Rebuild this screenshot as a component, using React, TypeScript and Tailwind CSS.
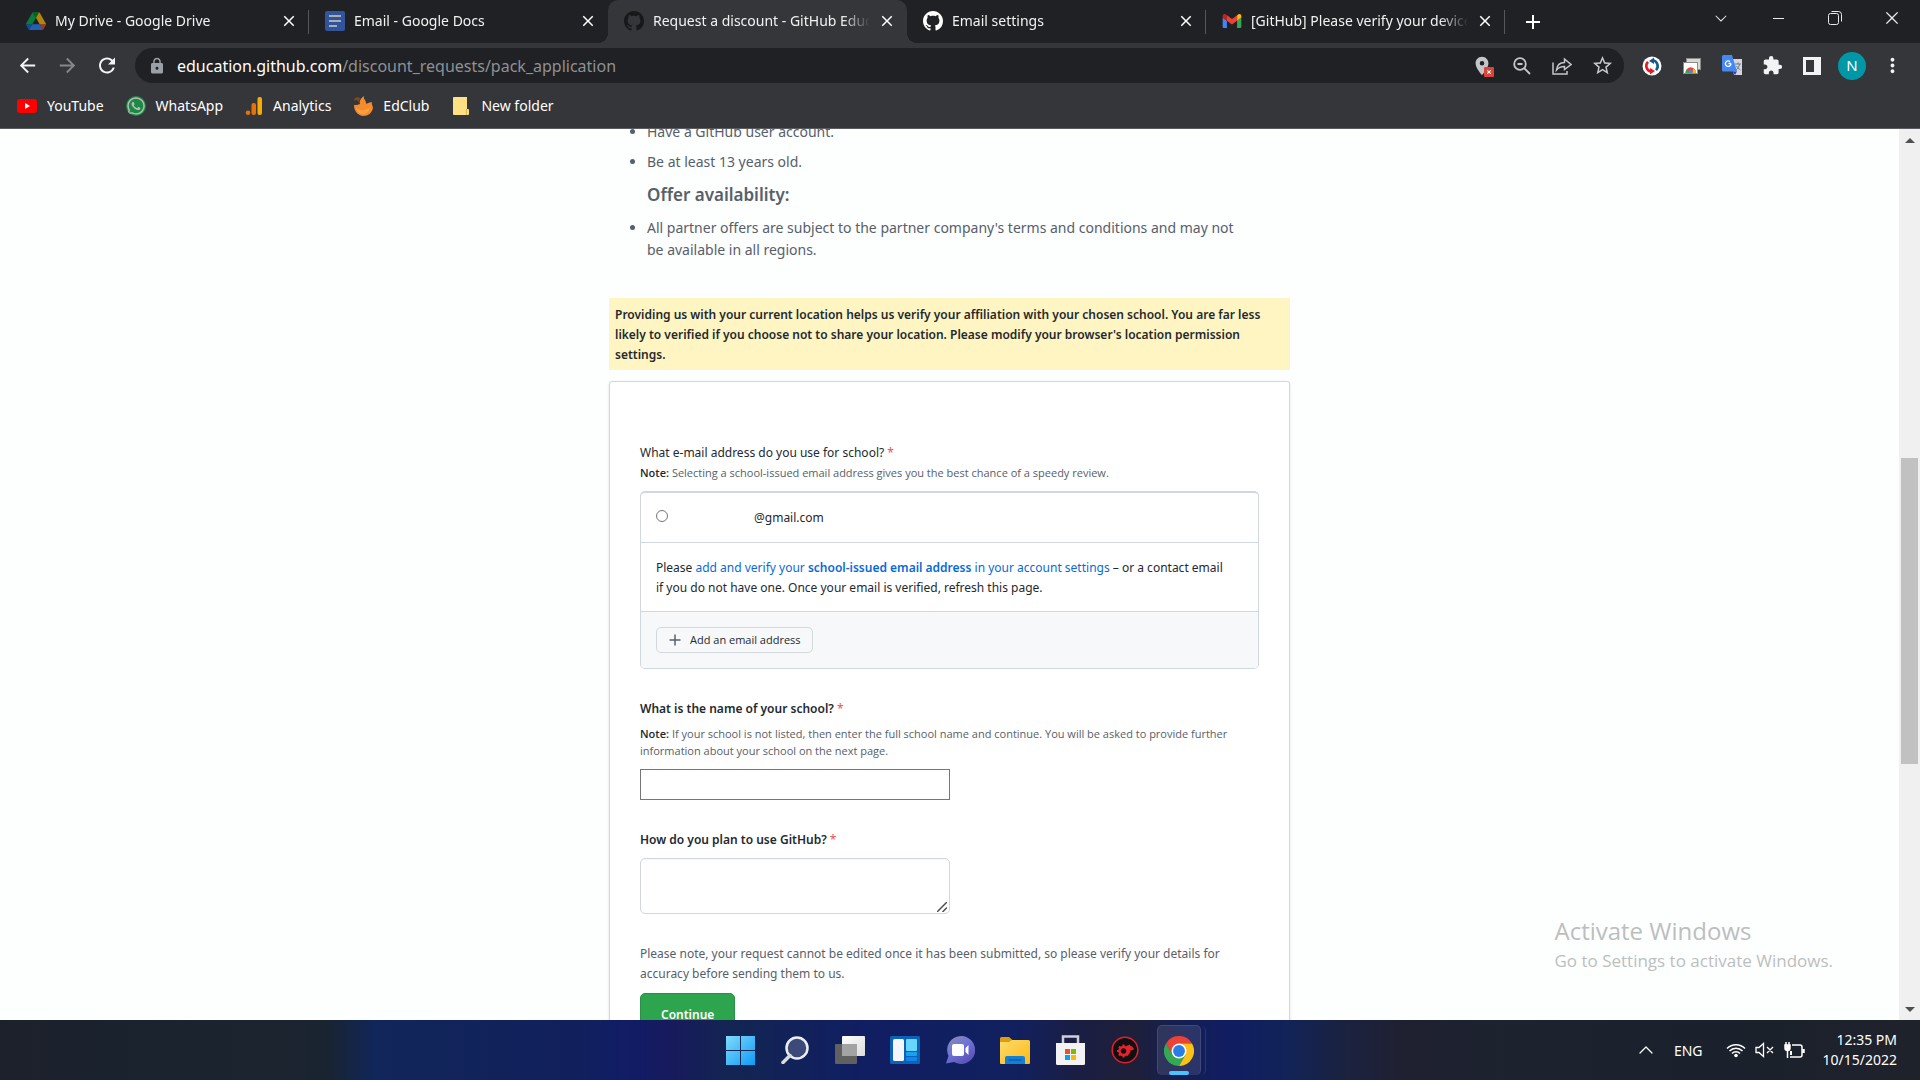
import type { ReactNode } from "react";
import { MdArrowBack, MdArrowForward, MdRefresh, MdLock, MdStarOutline, MdExtension, MdClose, MdAdd, MdMoreVert, MdLocationOn } from "react-icons/md";
import { FaWhatsapp } from "react-icons/fa";
import { VscChromeClose, VscChromeMinimize, VscChevronDown } from "react-icons/vsc";
import { ChevronUp } from "lucide-react";

const GITHUB_MARK =
  "M8 0C3.58 0 0 3.58 0 8c0 3.54 2.29 6.53 5.47 7.59.4.07.55-.17.55-.38 0-.19-.01-.82-.01-1.49-2.01.37-2.53-.49-2.69-.94-.09-.23-.48-.94-.82-1.13-.28-.15-.68-.52-.01-.53.63-.01 1.08.58 1.23.82.72 1.21 1.87.87 2.33.66.07-.52.28-.87.51-1.07-1.78-.2-3.64-.89-3.64-3.95 0-.87.31-1.59.82-2.15-.08-.2-.36-1.02.08-2.12 0 0 .67-.21 2.2.82.64-.18 1.32-.27 2-.27s1.36.09 2 .27c1.53-1.04 2.2-.82 2.2-.82.44 1.1.16 1.92.08 2.12.51.56.82 1.27.82 2.15 0 3.07-1.87 3.75-3.65 3.95.29.25.54.73.54 1.48 0 1.07-.01 1.93-.01 2.2 0 .21.15.46.55.38A8.01 8.01 0 0 0 16 8c0-4.42-3.58-8-8-8z";

function GitHubIcon({ className }: { className: string }) {
  return (
    <svg viewBox="0 0 16 16" className={`size-5 ${className}`} fill="currentColor">
      <path d={GITHUB_MARK} />
    </svg>
  );
}

function DriveIcon() {
  return (
    <svg viewBox="0 0 87.3 78" className="h-[18px] w-5 opacity-65">
      <path fill="#0066da" d="m6.6 66.85 3.85 6.65c.8 1.4 1.95 2.5 3.3 3.3l13.75-23.8h-27.5c0 1.55.4 3.1 1.2 4.5z" />
      <path fill="#00ac47" d="m43.65 25-13.75-23.8c-1.35.8-2.5 1.9-3.3 3.3l-25.4 44a9.06 9.06 0 0 0 -1.2 4.5h27.5z" />
      <path fill="#ea4335" d="m73.55 76.8c1.35-.8 2.5-1.9 3.3-3.3l1.6-2.75 7.65-13.25c.8-1.4 1.2-2.95 1.2-4.5h-27.502l5.852 11.5z" />
      <path fill="#00832d" d="m43.65 25 13.75-23.8c-1.35-.8-2.9-1.2-4.5-1.2h-18.5c-1.6 0-3.15.45-4.5 1.2z" />
      <path fill="#2684fc" d="m59.8 53h-32.3l-13.75 23.8c1.35.8 2.9 1.2 4.5 1.2h50.8c1.6 0 3.15-.45 4.5-1.2z" />
      <path fill="#ffba00" d="m73.4 26.5-12.7-22c-.8-1.4-1.95-2.5-3.3-3.3l-13.75 23.8 16.15 28h27.45c0-1.55-.4-3.1-1.2-4.5z" />
    </svg>
  );
}

function DocsIcon() {
  return (
    <svg viewBox="0 0 20 20" className="size-5">
      <rect width="20" height="20" rx="2" fill="#32549b" />
      <path d="M4 5h12M4 10h12M4 15h8" stroke="#a9adb5" strokeWidth="2" />
    </svg>
  );
}

function GmailIcon() {
  return (
    <svg viewBox="52 42 88 66" className="h-[14px] w-5">
      <path fill="#4285f4" d="M58 108h14V74L52 59v43c0 3.32 2.69 6 6 6" />
      <path fill="#34a853" d="M120 108h14c3.32 0 6-2.69 6-6V59l-20 15" />
      <path fill="#fbbc04" d="M120 48v26l20-15v-8c0-7.42-8.47-11.65-14.4-7.2" />
      <path fill="#ea4335" d="M72 74V48l24 18 24-18v26L96 92" />
      <path fill="#c5221f" d="M52 51v8l20 15V48l-5.6-4.2c-5.94-4.45-14.4-.22-14.4 7.2" />
    </svg>
  );
}

function ChromeLogo({ className }: { className: string }) {
  return (
    <svg viewBox="0 0 48 48" className={className}>
      <path fill="#ea4335" d="M24 12h20.8A24 24 0 0 0 3.2 12l10.4 18z" />
      <path fill="#34a853" d="M13.6 30 3.2 12A24 24 0 0 0 24 48l10.4-18z" />
      <path fill="#fbc116" d="M34.4 30 24 48a24 24 0 0 0 20.8-36H24z" />
      <circle cx="24" cy="24" r="12" fill="#fff" />
      <circle cx="24" cy="24" r="9.5" fill="#2a7de9" />
    </svg>
  );
}

type TabProps = { icon: ReactNode; title: string; active?: boolean; divider?: boolean };

function Tab({ icon, title, active, divider }: TabProps) {
  return (
    <div className={`relative flex h-full max-w-[299px] flex-1 items-center pb-0.5 pl-4 pr-[7px] ${active ? "rounded-t-[10px] bg-[#35363a]" : ""}`}>
      {active && (
        <>
          <span className="absolute bottom-0 -left-[10px] size-[10px] bg-[radial-gradient(circle_at_0_0,#202124_10px,#35363a_10px)]" />
          <span className="absolute bottom-0 -right-[10px] size-[10px] bg-[radial-gradient(circle_at_100%_0,#202124_10px,#35363a_10px)]" />
        </>
      )}
      <button className="flex h-full min-w-0 flex-1 items-center text-left">
        <span className="flex w-5 shrink-0 justify-center">{icon}</span>
        <span className="ml-[9px] flex-1 overflow-hidden text-[14px] whitespace-nowrap text-[#f1f1f1] [mask-image:linear-gradient(to_right,#000_calc(100%-28px),transparent)]">
          {title}
        </span>
      </button>
      <button aria-label={`Close ${title}`} className="ml-1 flex size-[26px] shrink-0 items-center justify-center text-white">
        <MdClose className="size-[18px]" />
      </button>
      {divider && <span className="absolute right-0 top-[10px] h-6 w-px bg-[#55575b]" />}
    </div>
  );
}

function TabStrip() {
  return (
    <div className="flex h-[43px] items-center bg-[#202124] pl-[10px]">
      <Tab icon={<DriveIcon />} title="My Drive - Google Drive" divider />
      <Tab icon={<DocsIcon />} title="Email - Google Docs" />
      <Tab icon={<GitHubIcon className="text-[#17181a]" />} title="Request a discount - GitHub Education" active />
      <Tab icon={<GitHubIcon className="text-white" />} title="Email settings" divider />
      <Tab icon={<GmailIcon />} title="[GitHub] Please verify your device" divider />
      <button aria-label="New tab" className="ml-4 text-white">
        <MdAdd className="size-6" />
      </button>
      <div className="-mt-2 ml-auto flex items-center text-[#e8eaed]">
        <button aria-label="Search tabs" className="flex w-[57px] justify-center"><VscChevronDown className="size-[18px]" /></button>
        <button aria-label="Minimize" className="flex w-[57px] justify-center"><VscChromeMinimize className="size-4" /></button>
        <button aria-label="Restore" className="flex w-[57px] justify-center">
          <svg viewBox="0 0 14 14" className="size-[14px]" fill="none" stroke="currentColor">
            <rect x="0.5" y="2.5" width="10" height="11" rx="2" />
            <path d="M3.5.5h7a3 3 0 0 1 3 3v7" />
          </svg>
        </button>
        <button aria-label="Close window" className="flex w-[57px] justify-center"><VscChromeClose className="size-[18px]" /></button>
      </div>
    </div>
  );
}

function Toolbar() {
  return (
    <div className="flex h-[45px] items-center pl-[15px] text-[#f1f3f4]">
      <button aria-label="Back" className="flex w-6 justify-center"><MdArrowBack className="size-[23px]" /></button>
      <button aria-label="Forward" className="ml-4 flex w-6 justify-center text-[#85878b]"><MdArrowForward className="size-[23px]" /></button>
      <button aria-label="Reload" className="ml-4 flex w-6 justify-center"><MdRefresh className="size-[25px]" /></button>
      <div className="ml-4 flex h-[35px] flex-1 items-center rounded-full bg-[#202124] pl-[13px] pr-[10px]">
        <MdLock className="size-[18px] text-[#9aa0a6]" />
        <a href="#address" className="ml-[11px] flex-1 text-[16px] text-[#8d9195]">
          <span className="text-white">education.github.com</span>/discount_requests/pack_application
        </a>
        <div className="flex items-center gap-4 text-[#c4c6c9]">
          <button aria-label="Location blocked" className="relative flex w-6 justify-center">
            <MdLocationOn className="size-[22px]" />
            <svg viewBox="0 0 9 9" className="absolute right-0 bottom-0 size-[10px]">
              <rect width="9" height="9" rx="1" fill="#db4437" />
              <path d="M3 3l3 3M6 3L3 6" stroke="#fff" />
            </svg>
          </button>
          <button aria-label="Zoom" className="flex w-6 justify-center">
            <svg viewBox="0 0 18 18" className="size-[18px]" fill="none" stroke="currentColor" strokeWidth="1.8">
              <circle cx="7" cy="7" r="5.8" />
              <path d="M4.5 7h5M11 11l6 6" />
            </svg>
          </button>
          <button aria-label="Share" className="flex w-6 justify-center">
            <svg viewBox="0 0 20 18" className="h-[18px] w-5" fill="none" stroke="currentColor" strokeWidth="1.5">
              <path d="M1 5.5V17h14v-3" />
              <path d="M4.5 13C5 8.5 8 5.5 12.5 5.5V2L19 7.5 12.5 12.5V9.500C9 9.5 6.5 10.5 4.5 13z" />
            </svg>
          </button>
          <button aria-label="Bookmark" className="flex w-6 justify-center"><MdStarOutline className="size-[23px]" /></button>
        </div>
      </div>
      <div className="flex items-center gap-4 pl-4 pr-4">
        <button aria-label="Sync extension" className="flex w-6 justify-center">
          <svg viewBox="0 0 20 20" className="size-5">
            <circle cx="10" cy="10" r="9.500" fill="#fff" />
            <path d="M11 4.200A6 6 0 0 1 14 14.200" stroke="#135a8c" strokeWidth="2.600" fill="none" />
            <path d="M12 1.500v6.500L7 5z" fill="#135a8c" />
            <path d="M9 15.800A6 6 0 0 1 6 5.800" stroke="#e21b22" strokeWidth="2.600" fill="none" />
            <path d="M8 18.500V12l5 3z" fill="#e21b22" />
          </svg>
        </button>
        <button aria-label="Screenshots extension" className="flex w-6 justify-center">
          <svg viewBox="0 0 18 16" className="h-4 w-[18px]">
            <rect x="3.5" y=".5" width="14" height="11" fill="#d8d8d8" stroke="#8b8b8b" />
            <rect x=".5" y="4.5" width="14" height="11" fill="#fff" stroke="#8b8b8b" />
            <path d="M2.500 15a5 5.500 0 0 1 10.500 0z" fill="#ea4335" />
            <path d="M2.500 15a5.500 5.500 0 0 1 1-3.500l3 3.500z" fill="#34a853" />
            <path d="M9 15l1.500-4.500a5.500 5.500 0 0 1 2.500 4.500z" fill="#fbbc04" />
            <circle cx="7.800" cy="13.500" r="2" fill="#4285f4" />
          </svg>
        </button>
        <button aria-label="Translate" className="flex w-6 justify-center">
          <svg viewBox="0 0 21 21" className="size-[21px]">
            <path d="M8 4h12v16h-8z" fill="#d5d7db" />
            <path d="M13 9h6M16 7.5V9M14 15c2-1.5 3-3 3.5-6M14.5 11c1 2 2.5 3 4 4" stroke="#6b7a90" fill="none" />
            <path d="M0 1.5A1.5 1.5 0 0 1 1.5 0H10l5 16.5H1.5A1.5 1.5 0 0 1 0 15z" fill="#4688f1" />
            <path d="M10.5 16.5H15L13 20z" fill="#3a3fb0" />
            <path d="M9 8.500H6.500M9 8.500A2.800 2.800 0 1 1 8 6.500" stroke="#fff" strokeWidth="1.300" fill="none" />
          </svg>
        </button>
        <button aria-label="Extensions" className="flex w-6 justify-center"><MdExtension className="size-[21px]" /></button>
        <button aria-label="Side panel" className="flex w-6 justify-center">
          <svg viewBox="0 0 18 18" className="size-[18px]">
            <path fill="currentColor" fillRule="evenodd" d="M0 0h18v18H0zM3 3v12h8V3z" />
          </svg>
        </button>
        <button aria-label="Profile" className="-mx-0.5 flex size-7 items-center justify-center rounded-full bg-[#0097a7] text-[15px] text-white">N</button>
        <button aria-label="Menu" className="flex w-6 justify-center"><MdMoreVert className="size-[23px]" /></button>
      </div>
    </div>
  );
}

function BookmarksBar() {
  const items: { label: string; icon: ReactNode }[] = [
    {
      label: "YouTube",
      icon: (
        <svg viewBox="0 0 20 14" className="h-[14px] w-5">
          <rect width="20" height="14" rx="3" fill="#f00" />
          <path d="M8 4l5 3-5 3z" fill="#fff" />
        </svg>
      ),
    },
    {
      label: "WhatsApp",
      icon: <FaWhatsapp className="size-5 rounded-full bg-[#1d8a43] text-[#b6bbb8]" />,
    },
    {
      label: "Analytics",
      icon: (
        <svg viewBox="0 0 18 18" className="size-[18px]">
          <rect x="12.5" width="4.5" height="18" rx="2" fill="#f9ab00" />
          <rect x="6.5" y="6" width="4.5" height="12" rx="2" fill="#e8710a" />
          <circle cx="3" cy="15.7" r="2.3" fill="#e8710a" />
        </svg>
      ),
    },
    {
      label: "EdClub",
      icon: (
        <svg viewBox="0 0 20 20" className="size-5">
          <path d="M1 9c2 0 4 0 6-1C6 5 8 2 11 0c-1 3 2 4 2 7 0 1 1 1 2 0l4-1c-1 2 1 4 1 6-1 5-5 8-9.500 8S1 16 1 9z" fill="#f68b2c" />
          <path d="M6 7C5 4 3 3 1 5c0-3 3-5 6-3z" fill="#7b4a1e" />
          <path d="M3 12c3 3 10 3 14-1-1 5-4 7-7 7s-6-2-7-6z" fill="#fb9f45" />
        </svg>
      ),
    },
    {
      label: "New folder",
      icon: (
        <svg viewBox="0 0 16 18" className="h-[18px] w-5">
          <path d="M0 1a1 1 0 0 1 1-1h13v12h1a1 1 0 0 1 1 1v4a1 1 0 0 1-1 1H1a1 1 0 0 1-1-1z" fill="#ffe082" />
          <path d="M13.5 12v6" stroke="#d9b44a" />
        </svg>
      ),
    },
  ];
  return (
    <nav className="flex h-[41px] items-center gap-[22px] border-b border-[#5b5c5f] pb-[5px] pl-[17px] text-[14px] text-white">
      {items.map((b) => (
        <a key={b.label} href="#bookmark" className="flex items-center gap-[10px]">
          {b.icon}
          {b.label}
        </a>
      ))}
    </nav>
  );
}

function Required() {
  return <span className="font-normal text-[#f0524f]">*</span>;
}

function DiscountForm() {
  return (
    <form className="mt-[11px] rounded-[3px] border border-[#d0d7de] bg-white px-[30px] pt-[61px] pb-10 text-[12px] leading-5 shadow-sm">
      <fieldset>
        <legend className="text-[12px]">What e-mail address do you use for school? <Required /></legend>
        <p className="mt-px font-['Open_Sans'] text-[11px] leading-[17px] text-[#57606a]">
          <b className="font-semibold text-[#24292f]">Note:</b> Selecting a school-issued email address gives you the best chance of a speedy review.
        </p>
        <div className="mt-[10px] overflow-hidden rounded-[5px] border border-t-2 border-[#d0d7de]">
          <div className="flex h-[49px] items-center px-[15px] pt-px">
            <input id="mail" type="radio" name="mail" className="mb-1 size-3 appearance-none rounded-full border border-[#767676]" />
            <label htmlFor="mail" className="ml-[86px]">@gmail.com</label>
          </div>
          <p className="border-t border-[#d0d7de] px-[15px] pt-[15px] pb-[13px]">
            Please{" "}
            <a href="#settings" className="text-[#0969da]">
              add and verify your <b className="font-semibold">school-issued email address</b> in your account settings
            </a>{" "}
            – or a contact email<br />if you do not have one. Once your email is verified, refresh this page.
          </p>
          <div className="border-t border-[#d0d7de] bg-[#f6f8fa] px-[15px] py-[15px]">
            <button type="button" className="flex h-[26px] items-center gap-2 rounded-[5px] border border-[#d3d8dc] px-[11px] font-['Open_Sans'] text-[11px] font-medium">
              <svg viewBox="0 0 14 14" className="size-[14px]" stroke="#57606a" strokeWidth="1.5">
                <path d="M7 1.5v11M1.5 7h11" />
              </svg>
              Add an email address
            </button>
          </div>
        </div>
      </fieldset>

      <label htmlFor="school" className="mt-[30px] block font-semibold">What is the name of your school? <Required /></label>
      <p className="mt-[6px] font-['Open_Sans'] text-[11px] leading-[17px] text-[#57606a]">
        <b className="font-semibold text-[#24292f]">Note:</b> If your school is not listed, then enter the full school name and continue. You will be asked to provide further<br />
        information about your school on the next page.
      </p>
      <input id="school" type="text" className="mt-[10px] block h-[31px] w-1/2 border border-[#767676] px-2" />

      <label htmlFor="plan" className="mt-[30px] block font-semibold">How do you plan to use GitHub? <Required /></label>
      <div className="relative mt-2 w-1/2">
        <textarea id="plan" className="block h-14 w-full resize-none rounded-[5px] border border-[#d0d7de] px-2 shadow-[inset_0_1px_0_rgba(208,215,222,0.2)]" />
        <svg viewBox="0 0 10 10" className="pointer-events-none absolute right-[3px] bottom-[2px] size-[10px]" stroke="#505050" strokeWidth="1.5">
          <path d="M0 10L10 0M5.500 10L10 5.500" />
        </svg>
      </div>

      <p className="mt-[30px] text-[#57606a]">
        Please note, your request cannot be edited once it has been submitted, so please verify your details for<br />
        accuracy before sending them to us.
      </p>
      <button type="button" className="mt-[9px] h-[43px] rounded-[5px] border border-[#2a8f47] bg-[#2da44e] px-5 font-semibold text-white">Continue</button>
    </form>
  );
}

function Page() {
  return (
    <div className="flex min-h-0 flex-1 bg-[#fdfefe]">
      <main className="min-w-0 flex-1 overflow-hidden text-[#24292f]">
        <div className="mx-auto max-w-[681px]">
          <div className="-mt-2 pl-[38px] pr-10 text-[14px] leading-[22px] text-[#57606a]">
            <ul className="list-disc space-y-2">
              <li>Have a GitHub user account.</li>
              <li>Be at least 13 years old.</li>
            </ul>
            <h3 className="my-[11px] text-[17px] font-semibold">Offer availability:</h3>
            <ul className="list-disc">
              <li>All partner offers are subject to the partner company's terms and conditions and may not be available in all regions.</li>
            </ul>
          </div>
          <p className="mt-[37px] bg-[#fff5c2] px-[6px] pt-[7px] pb-[5px] text-[12px] leading-5 font-semibold">
            Providing us with your current location helps us verify your affiliation with your chosen school. You are far less<br />
            likely to verified if you choose not to share your location. Please modify your browser's location permission<br />
            settings.
          </p>
          <DiscountForm />
        </div>
      </main>
      <div className="flex w-[21px] flex-col items-center bg-[#f0f0f0]">
        <svg viewBox="0 0 10 5" className="mt-[9px] h-[5px] w-[10px]"><path d="M5 0l5 5H0z" fill="#505050" /></svg>
        <div className="flex w-full flex-1 flex-col items-center">
          <div className="basis-[315px]" />
          <div className="w-[17px] basis-[306px] bg-[#c1c1c1]" />
        </div>
        <svg viewBox="0 0 10 5" className="mb-2 h-[5px] w-[10px]"><path d="M0 0h10L5 5z" fill="#505050" /></svg>
      </div>
    </div>
  );
}

const TASKS: { label: string; icon: ReactNode }[] = [
  {
    label: "Start",
    icon: (
      <svg viewBox="0 0 29 29" className="size-[29px]">
        <defs>
          <linearGradient id="win" x1="0" y1="0" x2="1" y2="1">
            <stop offset="0" stopColor="#7fdcfb" />
            <stop offset="1" stopColor="#0f9af5" />
          </linearGradient>
        </defs>
        <path d="M0 0h14v14H0zM15 0h14v14H15zM0 15h14v14H0zM15 15h14v14H15z" fill="url(#win)" />
      </svg>
    ),
  },
  {
    label: "Search",
    icon: (
      <svg viewBox="0 0 28 28" className="size-7">
        <circle cx="16" cy="12" r="10.5" fill="#3b4a78" stroke="#eceef2" strokeWidth="2.5" />
        <path d="M9 19.5l-7 7" stroke="#d9dbe0" strokeWidth="3.5" strokeLinecap="round" />
      </svg>
    ),
  },
  {
    label: "Task view",
    icon: (
      <svg viewBox="0 0 30 28" className="h-7 w-[30px]">
        <defs>
          <linearGradient id="tv" x1="0" y1="0" x2="1" y2="1"><stop stopColor="#fff" /><stop offset="1" stopColor="#dcdcdc" /></linearGradient>
        </defs>
        <rect y="8" width="22" height="20" rx="1" fill="#606060" />
        <rect x="7" width="23" height="20" rx="1" fill="url(#tv)" />
        <path d="M7 8h15v12H7z" fill="#a3a3a3" />
      </svg>
    ),
  },
  {
    label: "Widgets",
    icon: (
      <svg viewBox="0 0 30 28" className="h-7 w-[30px]">
        <rect width="30" height="28" rx="1.5" fill="#0b63b8" />
        <rect x="3" y="3" width="11" height="22" rx="1.5" fill="#f4f6f9" />
        <rect x="16" y="3" width="11" height="12" rx="1" fill="#68d5fd" />
        <rect x="16" y="16" width="11" height="4" rx="1" fill="#1aa0f0" />
        <rect x="16" y="21" width="11" height="4" rx="1" fill="#0f86ea" />
      </svg>
    ),
  },
  {
    label: "Chat",
    icon: (
      <svg viewBox="0 0 29 28" className="h-7 w-[29px]">
        <defs>
          <linearGradient id="chat" x1="0" y1="0" x2="0.7" y2="1">
            <stop stopColor="#8f8fae" /><stop offset=".5" stopColor="#6d74d6" /><stop offset="1" stopColor="#5a4fb6" />
          </linearGradient>
        </defs>
        <path d="M15 0a14 14 0 1 1-7 26L0 27.5 2.5 20A14 14 0 0 1 15 0z" fill="url(#chat)" />
        <rect x="6" y="8" width="12" height="12" rx="2" fill="#fff" />
        <path d="M19.5 12l3-3v10l-3-3z" fill="#fff" />
      </svg>
    ),
  },
  {
    label: "File Explorer",
    icon: (
      <svg viewBox="0 0 30 27" className="h-[27px] w-[30px]">
        <defs>
          <linearGradient id="fold" x1="0" y1="0" x2="1" y2="1"><stop stopColor="#ffdc6b" /><stop offset="1" stopColor="#fcb914" /></linearGradient>
        </defs>
        <path d="M0 1.5A1.5 1.5 0 0 1 1.5 0H9l3.5 3H28v6H0z" fill="#dd9d0c" />
        <path d="M0 5h9l3-2h16.5A1.5 1.5 0 0 1 30 4.5V26a1 1 0 0 1-1 1H1a1 1 0 0 1-1-1z" fill="url(#fold)" />
        <path d="M5 27v-6a2 2 0 0 1 2-2h16a2 2 0 0 1 2 2v6z" fill="#1380d6" />
        <path d="M9 23h12" stroke="#0b4f91" strokeLinecap="round" />
      </svg>
    ),
  },
  {
    label: "Microsoft Store",
    icon: (
      <svg viewBox="0 0 29 30" className="h-[30px] w-[29px]">
        <path d="M7 9V1.5h15V9" fill="none" stroke="#d0d1d6" strokeWidth="2.5" />
        <path d="M0 8h29v20.5a1.5 1.5 0 0 1-1.5 1.5h-26A1.5 1.5 0 0 1 0 28.5z" fill="#f3f3f4" />
        <path d="M9 14h5v5H9z" fill="#f25022" />
        <path d="M15 14h5v5h-5z" fill="#7fba00" />
        <path d="M9 20h5v5H9z" fill="#00a4ef" />
        <path d="M15 20h5v5h-5z" fill="#ffb900" />
      </svg>
    ),
  },
  {
    label: "Game booster",
    icon: (
      <svg viewBox="0 0 28 28" className="size-7">
        <circle cx="14" cy="14" r="12.8" fill="#120f12" stroke="#e0202b" strokeWidth="1.5" />
        <circle cx="12.500" cy="15" r="4" fill="none" stroke="#e5232e" strokeWidth="2.500" />
        <path d="M12.500 8.500v3M12.500 18.500v3M6 15h3M8 10.500l2 2M8 19.500l2-2M15 17.500l2 2" stroke="#e5232e" strokeWidth="2.200" />
        <path d="M14 12c1-3 4-2.500 5-3.500l.5 1.500c2 0 2.500 1.500 3.500 3l-2 1.500-1.500-.500c.5 3-2 5-5 5.500 1.500-2 2-3 1-5z" fill="#e5232e" />
      </svg>
    ),
  },
];

function Taskbar() {
  return (
    <footer className="grid h-[60px] grid-cols-[1fr_auto_1fr] items-center bg-[linear-gradient(to_right,#1e212b_0%,#1a222d_5%,#1c2430_15%,#192430_17%,#11265a_19.5%,#11205c_30%,#111c66_33%,#171a5c_35%,#132552_38%,#101e62_45%,#11205e_53%,#1a1e44_56%,#1e1f38_59%,#161f50_61%,#101d62_64%,#112358_67%,#1b2240_70%,#1f2031_73%,#1c232e_79%,#1a212c_90%,#1f222b_100%)]">
      <div />
      <div className="flex items-center">
        {TASKS.map((t) => (
          <button key={t.label} aria-label={t.label} className="flex w-[55px] justify-center">{t.icon}</button>
        ))}
        <div className="flex w-[55px] pl-1">
          <button aria-label="Google Chrome" className="relative flex h-[50px] w-[44px] shrink-0 items-center justify-center rounded-[5px] border-x border-t border-white/10 bg-white/10">
            <ChromeLogo className="size-[30px]" />
            <span className="absolute bottom-0 h-1 w-5 rounded-full bg-[#4cc2ff]" />
            <span className="absolute top-0 -right-[6px] h-full w-[10px] rounded-r-[5px] border-r border-white/10" />
          </button>
        </div>
      </div>
      <div className="flex items-center justify-end pr-[23px] text-[14px] text-white">
        <button aria-label="Hidden icons"><ChevronUp className="size-6" strokeWidth={1.25} /></button>
        <button className="ml-4">ENG</button>
        <button aria-label="Network, sound and battery" className="ml-[23px] flex items-center gap-[9px]">
          <svg viewBox="0 0 20 16" className="h-4 w-5" fill="none" stroke="#fff" strokeWidth="1.5">
            <path d="M1 6.5a12.500 12.500 0 0 1 18 0M3.5 9a9 9 0 0 1 13 0M6 11.5a5.500 5.500 0 0 1 8 0" />
            <circle cx="10" cy="13.5" r="1.8" fill="#fff" stroke="none" />
          </svg>
          <svg viewBox="0 0 20 16" className="h-4 w-5" fill="none" stroke="#fff" strokeWidth="1.3">
            <path d="M1 5.5h3L8.5 1.5v13L4 10.5H1zM12 5l6 6M18 5l-6 6" />
          </svg>
          <svg viewBox="0 0 21 17" className="h-[17px] w-[21px]" fill="none" stroke="#fff" strokeWidth="1.5">
            <path d="M8 3h8a2 2 0 0 1 2 2v8a2 2 0 0 1-2 2H6" />
            <path d="M19.5 7v4" strokeWidth="2.5" />
            <path d="M2 0v3M5 0v3M3.5 8v8" />
            <path d="M1 3h5v3a2.5 2.5 0 0 1-5 0z" fill="#fff" />
            <path d="M7 9v4" strokeWidth="2" />
          </svg>
        </button>
        <button className="ml-[18px] text-right leading-5">
          <span className="block">12:35 PM</span>
          <span className="block">10/15/2022</span>
        </button>
      </div>
    </footer>
  );
}

export default function App() {
  return (
    <div className="relative flex h-screen flex-col overflow-hidden font-['Noto_Sans','Open_Sans',sans-serif]">
      <header className="bg-[#35363a]">
        <TabStrip />
        <Toolbar />
        <BookmarksBar />
      </header>
      <Page />
      <Taskbar />
      <div className="pointer-events-none absolute right-[87px] bottom-[105px] font-['Open_Sans',sans-serif] text-[#bcbebe]">
        <div className="text-[24px] leading-8">Activate Windows</div>
        <div className="text-[17px] leading-7">Go to Settings to activate Windows.</div>
      </div>
    </div>
  );
}
